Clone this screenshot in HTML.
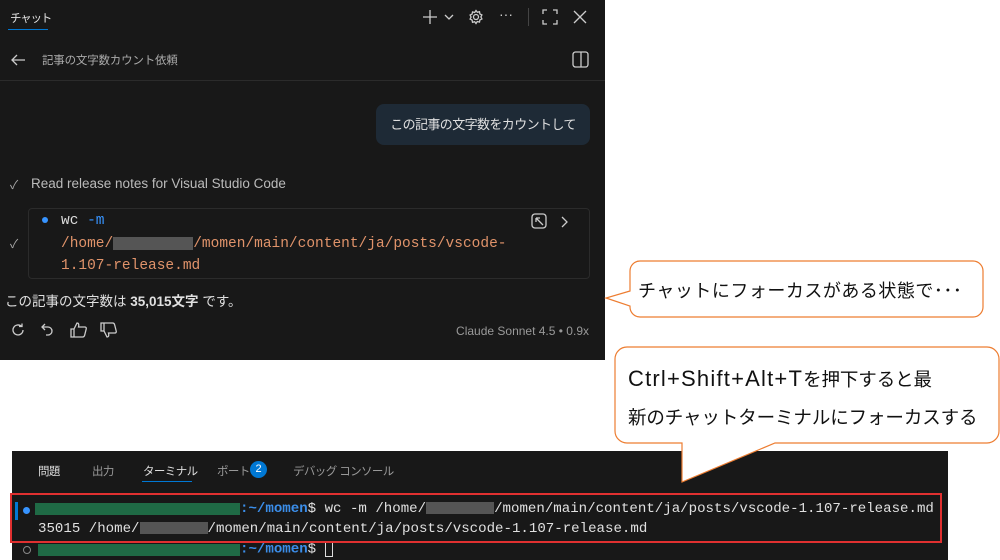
<!DOCTYPE html>
<html><head><meta charset="utf-8"><style>
*{margin:0;padding:0;box-sizing:border-box}
body{width:1000px;height:560px;background:#fff;position:relative;overflow:hidden;font-family:"Liberation Sans","Noto Sans CJK JP",sans-serif}
.a{position:absolute;white-space:nowrap}
.chat{position:absolute;left:0;top:0;width:605px;height:360px;background:#181818;color:#ccc}
.mono{font-family:"Liberation Mono","Noto Sans CJK JP",monospace}
.term{position:absolute;left:12px;top:451px;width:936px;height:109px;background:#181818;color:#ccc}
.term .t{font-size:11.5px;letter-spacing:-0.6px}
svg.i{position:absolute;fill:none;stroke:#ccc;stroke-width:1.3}
</style></head><body>
<div class="chat">
 <div class="a" style="left:10px;top:10px;font-size:11.5px;letter-spacing:-1.2px;color:#e0e0e0">チャット</div>
 <div class="a" style="left:8px;top:29px;width:40px;height:1px;background:#0078d4"></div>
 <svg class="i" style="left:422px;top:9px" width="16" height="16"><path d="M8 1v14M1 8h14"/></svg>
 <svg class="i" style="left:444px;top:13px" width="10" height="8"><path d="M1 2l4 4 4-4"/></svg>
 <svg class="i" style="left:468px;top:9px" width="16" height="16"><circle cx="8" cy="8" r="2.5"/><path d="M8 1.5l1.3 1.8 2.2-.6.4 2.2 2 1-1 2 1 2-2 1-.4 2.2-2.2-.6L8 14.5l-1.3-1.8-2.2.6-.4-2.2-2-1 1-2-1-2 2-1 .4-2.2 2.2.6z"/></svg>
 <div class="a" style="left:499px;top:6px;font-size:14px;color:#ccc">···</div>
 <div class="a" style="left:528px;top:8px;width:1px;height:18px;background:#444"></div>
 <svg class="i" style="left:542px;top:9px" width="16" height="16"><path d="M1 5V1h4M11 1h4v4M15 11v4h-4M5 15H1v-4"/></svg>
 <svg class="i" style="left:573px;top:10px" width="14" height="14"><path d="M1 1l12 12M13 1L1 13"/></svg>
 <svg class="i" style="left:10px;top:52px" width="16" height="16"><path d="M15 8H2M7 3L2 8l5 5"/></svg>
 <div class="a" style="left:42px;top:52px;font-size:11.5px;letter-spacing:-0.2px;color:#aaa">記事の文字数カウント依頼</div>
 <svg class="i" style="left:572px;top:51px" width="17" height="17"><rect x="1" y="1" width="15" height="15" rx="2.5"/><path d="M9 1v15"/></svg>
 <div class="a" style="left:0;top:80px;width:605px;height:1px;background:#2b2b2b"></div>
 <div class="a" style="left:376px;top:104px;width:214px;height:41px;background:#1e2a36;border-radius:8px;font-size:13px;letter-spacing:-0.6px;color:#e0e0e0;text-align:center;line-height:41px">この記事の文字数をカウントして</div>
 <div class="a" style="left:10px;top:176px;font-size:12px;color:#aaa">✓</div>
 <div class="a" style="left:31px;top:176px;font-size:13.5px;color:#bbb">Read release notes for Visual Studio Code</div>
 <div class="a" style="left:28px;top:208px;width:562px;height:71px;border:1px solid #2b2b2b;border-radius:4px"></div>
 <div class="a" style="left:10px;top:235px;font-size:12px;color:#aaa">✓</div>
 <div class="a" style="left:42px;top:217px;width:6px;height:6px;border-radius:50%;background:#3794ff"></div>
 <div class="a mono" style="left:61px;top:213px;font-size:14.5px;color:#ddd">wc <span style="color:#3794ff">-m</span></div>
 <div class="a mono" style="left:61px;top:236px;font-size:14.5px;color:#e0936a">/home/<span style="display:inline-block;width:80px;height:13px;background:#555;vertical-align:middle"></span>/momen/main/content/ja/posts/vscode-</div>
 <div class="a mono" style="left:61px;top:258px;font-size:14.5px;color:#e0936a">1.107-release.md</div>
 <svg class="i" style="left:531px;top:213px" width="17" height="17"><rect x="1" y="1" width="14" height="14" rx="3"/><path d="M5 5l7 7M5 5v4M5 5h4"/></svg>
 <svg class="i" style="left:560px;top:215px" width="10" height="14"><path d="M2 2l5 5-5 5"/></svg>
 <div class="a" style="left:5px;top:290px;font-size:13.5px;color:#e0e0e0">この記事の文字数は <b>35,015文字</b> です。</div>
 <svg class="i" style="left:10px;top:322px" width="16" height="16"><path d="M13 8a5 5 0 1 1-1.5-3.6M12 1.5v3h-3"/></svg>
 <svg class="i" style="left:40px;top:322px" width="16" height="16"><path d="M5 2L2 5l3 3M2 5h6a4 4 0 0 1 0 8H6"/></svg>
 <svg class="i" style="left:70px;top:321px" width="18" height="18"><path d="M1 8h3v8H1zM4 8l3-6c2 0 2 2 1.5 4H15c1 0 1.5 1 1.2 2l-1.5 6c-.2 1-1 2-2 2H4"/></svg>
 <svg class="i" style="left:100px;top:321px" width="18" height="18"><path d="M1 2h3v8H1zM4 10l3 6c2 0 2-2 1.5-4H15c1 0 1.5-1 1.2-2l-1.5-6c-.2-1-1-2-2-2H4"/></svg>
 <div class="a" style="right:16px;top:324px;font-size:12px;color:#999">Claude Sonnet 4.5 • 0.9x</div>
</div>

<div class="term">
 <div class="a t" style="left:26px;top:12px;color:#ddd">問題</div>
 <div class="a t" style="left:80px;top:12px;color:#999">出力</div>
 <div class="a t" style="left:131px;top:12px;color:#ddd">ターミナル</div>
 <div class="a" style="left:130px;top:30px;width:50px;height:1px;background:#0078d4"></div>
 <div class="a t" style="left:205px;top:12px;color:#999">ポート</div>
 <div class="a" style="left:238px;top:10px;width:17px;height:17px;border-radius:50%;background:#0078d4;color:#fff;font-size:11px;text-align:center;line-height:17px">2</div>
 <div class="a t" style="left:281px;top:12px;color:#999">デバッグ コンソール</div>
 <div class="a" style="left:3px;top:51px;width:3px;height:18px;background:#0078d4"></div>
 <div class="a" style="left:11px;top:56px;width:7px;height:7px;border-radius:50%;background:#3794ff"></div>
 <div class="a" style="left:23px;top:52px;width:205px;height:12px;background:#1f6a45"></div>
 <div class="a mono" style="left:228px;top:50px;font-size:14.1px;color:#e0e0e0"><span style="color:#3b8eea;font-weight:bold">:~/momen</span>$ wc -m /home/<span style="display:inline-block;width:68px;height:12px;background:#555;vertical-align:middle"></span>/momen/main/content/ja/posts/vscode-1.107-release.md</div>
 <div class="a mono" style="left:26px;top:70px;font-size:14.1px;color:#e0e0e0">35015 /home/<span style="display:inline-block;width:68px;height:12px;background:#555;vertical-align:middle"></span>/momen/main/content/ja/posts/vscode-1.107-release.md</div>
 <div class="a" style="left:11px;top:95px;width:8px;height:8px;border-radius:50%;border:1px solid #888"></div>
 <div class="a" style="left:26px;top:93px;width:202px;height:12px;background:#1f6a45"></div>
 <div class="a mono" style="left:228px;top:90px;font-size:14.1px;color:#e0e0e0"><span style="color:#3b8eea;font-weight:bold">:~/momen</span>$ <span style="display:inline-block;width:8px;height:16px;border:1px solid #ddd;vertical-align:middle"></span></div>
</div>
<div class="a" style="left:10px;top:493px;width:932px;height:50px;border:2px solid #e03030"></div>

<svg class="a" style="left:600px;top:255px" width="400" height="235">
 <path d="M40 6H373a10 10 0 0 1 10 10V52a10 10 0 0 1-10 10H40a10 10 0 0 1-10-10V51L6 43 30 36V16a10 10 0 0 1 10-10z" fill="#fff" stroke="#ed7d31" stroke-width="1.2"/>
 <path d="M27 92H387a12 12 0 0 1 12 12V176a12 12 0 0 1-12 12H175L82 227V188H27a12 12 0 0 1-12-12V104a12 12 0 0 1 12-12z" fill="#fff" stroke="#ed7d31" stroke-width="1.2"/>
</svg>
<div class="a" style="left:638px;top:277px;font-size:18px;letter-spacing:0.5px;color:#111">チャットにフォーカスがある状態で･･･</div>
<div class="a" style="left:628px;top:360px;font-size:18.5px;letter-spacing:-0.1px;color:#111;line-height:38px"><span style="font-size:22px;letter-spacing:1.2px">Ctrl+Shift+Alt+T</span>を押下すると最<br>新のチャットターミナルにフォーカスする</div>
</body></html>
